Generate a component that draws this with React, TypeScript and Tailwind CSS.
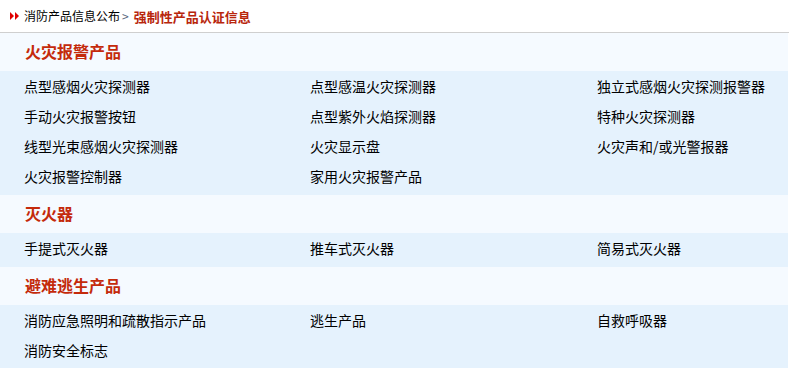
export default function App() {
  const sections = [
    {
      title: "火灾报警产品",
      items: [
        "点型感烟火灾探测器",
        "点型感温火灾探测器",
        "独立式感烟火灾探测报警器",
        "手动火灾报警按钮",
        "点型紫外火焰探测器",
        "特种火灾探测器",
        "线型光束感烟火灾探测器",
        "火灾显示盘",
        "火灾声和/或光警报器",
        "火灾报警控制器",
        "家用火灾报警产品",
      ],
    },
    {
      title: "灭火器",
      items: ["手提式灭火器", "推车式灭火器", "简易式灭火器"],
    },
    {
      title: "避难逃生产品",
      items: ["消防应急照明和疏散指示产品", "逃生产品", "自救呼吸器", "消防安全标志"],
    },
  ];

  return (
    <div
      className="w-[789px] h-[368px] overflow-hidden bg-white"
      style={{ fontFamily: '"Noto Sans CJK SC", "Liberation Sans", sans-serif' }}
    >
      {/* Breadcrumb */}
      <div className="h-[33px] border-b border-[#cfcfcf] flex items-center pl-[10px]">
        <svg width="9" height="8" viewBox="0 0 9 8" className="mr-[5px]">
          <polygon points="0,0 4,4 0,8" fill="#e00000" />
          <polygon points="5,0 9,4 5,8" fill="#e00000" />
        </svg>
        <span className="text-[12px] text-black leading-none">消防产品信息公布</span>
        <span className="text-[12px] text-[#5a6a80] leading-none mx-[2px]">&gt;</span>
        <span className="text-[13px] font-bold text-[#b8260c] leading-none ml-[3px]">
          强制性产品认证信息
        </span>
      </div>

      {sections.map((s) => (
        <div key={s.title} className="mr-[1px]">
          <div className="h-[38px] bg-[#f5faff] flex items-center pl-[25px] pb-[2px]">
            <span className="text-[16px] font-bold text-[#c42a0b] leading-none">{s.title}</span>
          </div>
          <div className="bg-[#e5f2fd] pl-[24px] pb-[4px] grid grid-cols-[286px_287px_1fr]">
            {s.items.map((it) => (
              <div key={it} className="h-[30px] flex items-center text-[14px] text-black leading-none">
                {it}
              </div>
            ))}
          </div>
        </div>
      ))}
    </div>
  );
}
